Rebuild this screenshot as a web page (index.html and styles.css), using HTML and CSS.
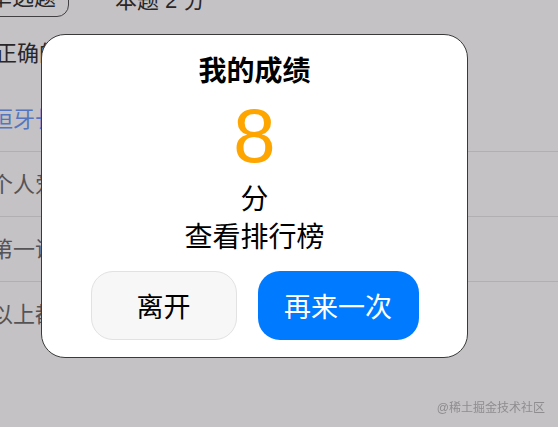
FILE: index.html
```html
<!DOCTYPE html>
<html lang="zh-CN">
<head>
  <meta charset="UTF-8">
  <meta name="viewport" content="width=device-width, initial-scale=1.0">
  <title>答题结果</title>
  <link rel="stylesheet" href="styles.css">
</head>
<body>
  <div class="page">
    <div class="question-head">
      <span class="type-tag">单选题</span>
      <span class="score-tip">本题 2 分</span>
    </div>
    <p class="question-title">正确的是</p>
    <ul class="options">
      <li class="option selected">恒牙长出</li>
      <li class="option">个人爱好</li>
      <li class="option">第一课</li>
      <li class="option">以上都不对</li>
    </ul>
  </div>

  <div class="mask">
    <div class="result-dialog">
      <h3 class="result-title">我的成绩</h3>
      <div class="result-score">8</div>
      <div class="result-unit">分</div>
      <div class="result-rank">查看排行榜</div>
      <div class="result-actions">
        <button class="btn btn-leave">离开</button>
        <button class="btn btn-again">再来一次</button>
      </div>
    </div>
  </div>

  <div class="watermark">@稀土掘金技术社区</div>
</body>
</html>
```

FILE: styles.css
```css
body {
  font-family: "Liberation Sans", "Noto Sans CJK SC", sans-serif;
  margin: 0;
  padding: 0;
  background-color: #fff;
  color: #333;
  overflow: hidden;
}

.page {
  margin-left: -9px;
}

.question-head {
  display: flex;
  align-items: center;
  height: 36px;
  margin-top: -20px;
}

.type-tag {
  display: inline-block;
  height: 36px;
  line-height: 36px;
  width: 90px;
  text-align: center;
  border: 1px solid #555;
  border-radius: 12px;
  font-size: 22px;
  margin-left: -14px;
}

.score-tip {
  font-size: 22px;
  margin-left: 46px;
}

.question-title {
  font-size: 22px;
  margin: 0;
  padding: 18px 0 0 4px;
  line-height: 40px;
}

.options {
  list-style: none;
  margin: 0;
  padding: 0;
  margin-top: 13px;
}

.option {
  height: 65px;
  line-height: 65px;
  font-size: 22px;
  color: #6e6e6e;
  border-bottom: 1px solid #e6e6e6;
  box-sizing: border-box;
}

.option:last-child {
  border-bottom: none;
}

.option.selected {
  color: #6d9cf8;
}

.mask {
  position: fixed;
  top: 0;
  left: 0;
  right: 0;
  bottom: 0;
  background-color: rgba(8, 0, 12, 0.24);
  display: flex;
  align-items: flex-start;
  padding: 34px 0 0 41px;
}

.result-dialog {
  width: 427px;
  box-sizing: border-box;
  background-color: #fff;
  border: 1px solid #3a3a3a;
  border-radius: 24px;
  padding: 18px 0 17px;
  text-align: center;
  color: #000;
}

.result-title {
  margin: 0;
  font-size: 28px;
  line-height: 38px;
  font-weight: bold;
}

.result-score {
  margin-top: 7px;
  font-size: 76px;
  line-height: 76px;
  color: #ffa500;
}

.result-unit,
.result-rank {
  font-size: 28px;
  line-height: 38px;
}

.result-unit {
  margin-top: 7px;
}

.result-actions {
  display: flex;
  justify-content: center;
  gap: 21px;
  margin-top: 14px;
}

.btn {
  height: 69px;
  border-radius: 22px;
  font-family: inherit;
  font-size: 27px;
  cursor: pointer;
}

.btn-leave {
  width: 146px;
  background-color: #f7f7f7;
  border: 1px solid #e2e2e2;
  color: #000;
}

.btn-again {
  width: 161px;
  background-color: #007aff;
  border: none;
  color: #fff;
}

.watermark {
  position: fixed;
  right: 13px;
  bottom: 12px;
  font-size: 12px;
  color: #8e8c8f;
}
```
